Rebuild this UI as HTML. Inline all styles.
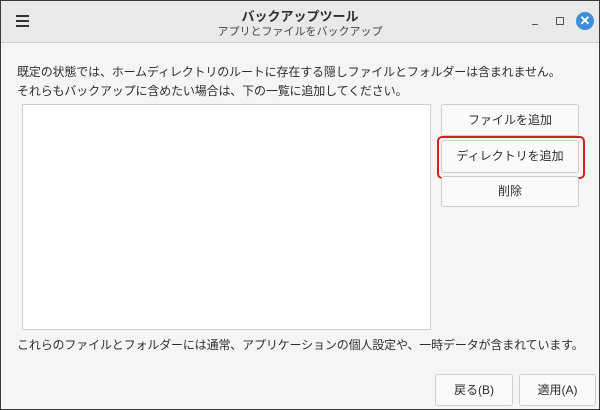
<html><head><style>
body{margin:0;width:600px;height:410px;overflow:hidden;font-family:"Liberation Sans","Noto Sans CJK JP",sans-serif;color:#2e2e2e;font-size:12px}
.win{position:absolute;left:0;top:0;width:598px;height:408px;border:1px solid #3a3a3a;background:#f5f5f5}
.hdr{position:absolute;left:0;top:0;width:598px;height:41px;background:#e9e9e9;border-bottom:1px solid #cfcfcf}
.t1{position:absolute;top:5px;width:100%;text-align:center;font-weight:bold;font-size:13px}
.t2{position:absolute;top:22px;width:100%;text-align:center;font-size:11px;color:#444}
.btn{position:absolute;background:#fafafa;border:1px solid #cdcdcd;border-radius:3px;text-align:center;box-sizing:border-box}
.txt{position:absolute;left:16px;white-space:nowrap;letter-spacing:-0.15px}
</style></head><body><div class="win">
<div class="hdr">
<div style="position:absolute;left:15px;top:14px;width:13px;height:2px;background:#333;box-shadow:0 5px 0 #333,0 10px 0 #333"></div>
<div class="t1">バックアップツール</div><div class="t2">アプリとファイルをバックアップ</div>
<div style="position:absolute;left:531px;top:23px;width:6px;height:1px;background:#555"></div>
<div style="position:absolute;left:555px;top:16px;width:6px;height:6px;border:1px solid #555"></div>
<div style="position:absolute;left:575px;top:11px;width:18px;height:18px;border-radius:50%;background:#3d8fd8;color:#fff;font-size:13px;font-weight:bold;text-align:center;line-height:18px">✕</div>
</div>
<div class="txt" style="top:62px">既定の状態では、ホームディレクトリのルートに存在する隠しファイルとフォルダーは含まれません。</div>
<div class="txt" style="top:81px">それらもバックアップに含めたい場合は、下の一覧に追加してください。</div>
<div style="position:absolute;left:21px;top:103px;width:407px;height:224px;background:#fff;border:1px solid #cfcfcf"></div>
<div class="btn" style="left:440px;top:103px;width:138px;height:32px;line-height:30px">ファイルを追加</div>
<div style="position:absolute;left:436px;top:135px;width:144px;height:39px;border:2px solid #d42020;border-radius:5px"></div>
<div class="btn" style="left:440px;top:139px;width:138px;height:33px;line-height:31px">ディレクトリを追加</div>
<div class="btn" style="left:440px;top:175px;width:138px;height:31px;line-height:29px">削除</div>
<div class="txt" style="top:335px">これらのファイルとフォルダーには通常、アプリケーションの個人設定や、一時データが含まれています。</div>
<div class="btn" style="left:434px;top:373px;width:78px;height:32px;line-height:30px">戻る(B)</div>
<div class="btn" style="left:518px;top:373px;width:77px;height:32px;line-height:30px">適用(A)</div>
</div></body></html>
